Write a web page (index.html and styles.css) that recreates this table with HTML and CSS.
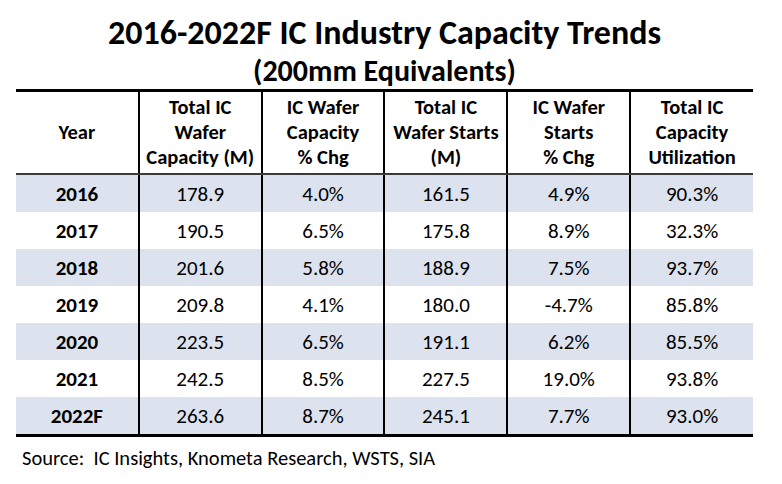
FILE: index.html
```html
<!DOCTYPE html>
<html>
<head>
<meta charset="utf-8">
<link rel="stylesheet" href="styles.css">
</head>
<body>
<div class="page">
  <h1 class="title">2016-2022F IC Industry Capacity Trends</h1>
  <h2 class="subtitle">(200mm Equivalents)</h2>
  <table class="cap-table">
    <thead>
      <tr>
        <th>Year</th>
        <th>Total IC<br>Wafer<br>Capacity (M)</th>
        <th>IC Wafer<br>Capacity<br>% Chg</th>
        <th>Total IC<br>Wafer Starts<br>(M)</th>
        <th>IC Wafer<br>Starts<br>% Chg</th>
        <th>Total IC<br>Capacity<br>Utilization</th>
      </tr>
    </thead>
    <tbody>
      <tr class="shade"><td class="yr">2016</td><td>178.9</td><td>4.0%</td><td>161.5</td><td>4.9%</td><td>90.3%</td></tr>
      <tr><td class="yr">2017</td><td>190.5</td><td>6.5%</td><td>175.8</td><td>8.9%</td><td>32.3%</td></tr>
      <tr class="shade"><td class="yr">2018</td><td>201.6</td><td>5.8%</td><td>188.9</td><td>7.5%</td><td>93.7%</td></tr>
      <tr><td class="yr">2019</td><td>209.8</td><td>4.1%</td><td>180.0</td><td>-4.7%</td><td>85.8%</td></tr>
      <tr class="shade"><td class="yr">2020</td><td>223.5</td><td>6.5%</td><td>191.1</td><td>6.2%</td><td>85.5%</td></tr>
      <tr><td class="yr">2021</td><td>242.5</td><td>8.5%</td><td>227.5</td><td>19.0%</td><td>93.8%</td></tr>
      <tr class="shade"><td class="yr">2022F</td><td>263.6</td><td>8.7%</td><td>245.1</td><td>7.7%</td><td>93.0%</td></tr>
    </tbody>
  </table>
  <p class="source">Source:&nbsp; IC Insights, Knometa Research, WSTS, SIA</p>
</div>
</body>
</html>
```
FILE: styles.css
```css
html, body {
  margin: 0;
  padding: 0;
  background: #ffffff;
}
body {
  font-family: "Carlito", "Open Sans", "Liberation Sans", sans-serif;
  color: #000;
}
.page {
  width: 782px;
  height: 484px;
  padding: 13px 0 0 16px;
  box-sizing: border-box;
}
.title {
  margin: 0;
  width: 737px;
  text-align: center;
  font-size: 34px;
  font-weight: bold;
  line-height: 40px;
}
.subtitle {
  margin: 0;
  width: 737px;
  text-align: center;
  font-size: 30px;
  font-weight: bold;
  line-height: 36px;
}
.cap-table {
  width: 737px;
  border-collapse: collapse;
  table-layout: fixed;
  border-top: 3px solid #000;
  border-bottom: 3px solid #000;
}
.cap-table th,
.cap-table td {
  text-align: center;
  padding: 0;
  border-left: 2px solid #000;
}
.cap-table th:first-child,
.cap-table td:first-child {
  border-left: none;
}
.cap-table th {
  font-size: 20.5px;
  font-weight: bold;
  line-height: 25px;
  height: 81px;
  border-bottom: 2px solid #3a3a3a;
}
.cap-table td {
  font-size: 21px;
  height: 37px;
  line-height: 24px;
}
.cap-table td.yr {
  font-weight: bold;
}
.cap-table tr.shade td {
  background: #dce3ef;
}
.source {
  margin: 9px 0 0 6px;
  font-size: 20.5px;
  line-height: 24px;
}
```
